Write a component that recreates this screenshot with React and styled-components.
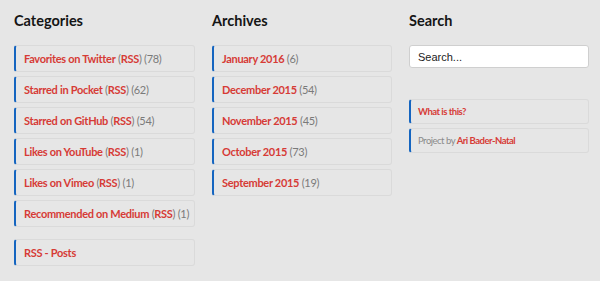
import React from "react";
import styled, { createGlobalStyle } from "styled-components";

const CATEGORIES = [
    { name: "Favorites on Twitter", count: 78 },
    { name: "Starred in Pocket", count: 62 },
    { name: "Starred on GitHub", count: 54 },
    { name: "Likes on YouTube", count: 1 },
    { name: "Likes on Vimeo", count: 1 },
    { name: "Recommended on Medium", count: 1 },
];

const ARCHIVES = [
    { name: "January 2016", count: 6 },
    { name: "December 2015", count: 54 },
    { name: "November 2015", count: 45 },
    { name: "October 2015", count: 73 },
    { name: "September 2015", count: 19 },
];

const Global = createGlobalStyle`
    html, body {
        margin: 0;
        background: #e6e6e6;
        font-family: Lato, "Liberation Sans", sans-serif;
    }
`;

export default () => (
    <>
        <Global />
        <Footer>
            <Column>
                <Heading>Categories</Heading>
                <List>
                    {CATEGORIES.map((c) => (
                        <Item key={c.name}>
                            <Link>{c.name}</Link> <Muted>(</Muted><Link>RSS</Link><Muted>) ({c.count})</Muted>
                        </Item>
                    ))}
                </List>
                <List $spaced>
                    <Item><Link>RSS - Posts</Link></Item>
                </List>
            </Column>
            <Column>
                <Heading>Archives</Heading>
                <List>
                    {ARCHIVES.map((a) => (
                        <Item key={a.name}>
                            <Link>{a.name}</Link> <Muted>({a.count})</Muted>
                        </Item>
                    ))}
                </List>
            </Column>
            <Column>
                <Heading>Search</Heading>
                <SearchInput placeholder="Search..." />
                <List $spaced="31px">
                    <Item $small><Link>What is this?</Link></Item>
                    <Item $small><Muted $light>Project by</Muted> <Link>Ari Bader-Natal</Link></Item>
                </List>
            </Column>
        </Footer>
    </>
);

const Footer = styled.div`
    display: grid;
    grid-template-columns: 181px 180px 180px;
    column-gap: 17px;
    padding: 11px 0 0 14px;
    min-height: 270px;
`

const Column = styled.div`
    display: flex;
    flex-direction: column;
`

const Heading = styled.h2`
    font-family: Lato, sans-serif;
    font-size: 14.5px;
    font-weight: 700;
    color: #151515;
    margin: 0 0 14px;
    line-height: 20px;
`

const List = styled.ul`
    list-style: none;
    margin: ${({ $spaced }) => ($spaced ? ($spaced === true ? "12px" : $spaced) : "0")} 0 0;
    padding: 0;
    display: flex;
    flex-direction: column;
    gap: 4px;
`

const Item = styled.li`
    box-sizing: border-box;
    height: ${({ $small }) => ($small ? "25px" : "27px")};
    line-height: ${({ $small }) => ($small ? "23px" : "25px")};
    white-space: nowrap;
    padding-left: ${({ $small }) => ($small ? "7px" : "8px")};
    border: 1px solid #dadada;
    border-left: 2px solid #1565c0;
    border-radius: 3px;
    font-size: ${({ $small }) => ($small ? "9.5px" : "11px")};
    letter-spacing: ${({ $small }) => ($small ? "-0.5px" : "-0.3px")};
`

const Link = styled.span`
    color: #d63b36;
    font-weight: 700;
`

const Muted = styled.span`
    color: ${({ $light }) => ($light ? "#8a8a8a" : "#7a7a7a")};
    font-weight: 400;
`

const SearchInput = styled.input`
    box-sizing: border-box;
    width: 180px;
    height: 23px;
    padding: 0 8px;
    border: 1px solid #cfcfcf;
    border-radius: 3px;
    background: #fff;
    font-family: "Liberation Sans", Arial, sans-serif;
    font-size: 11px;
    &::placeholder {
        color: #222;
    }
`
